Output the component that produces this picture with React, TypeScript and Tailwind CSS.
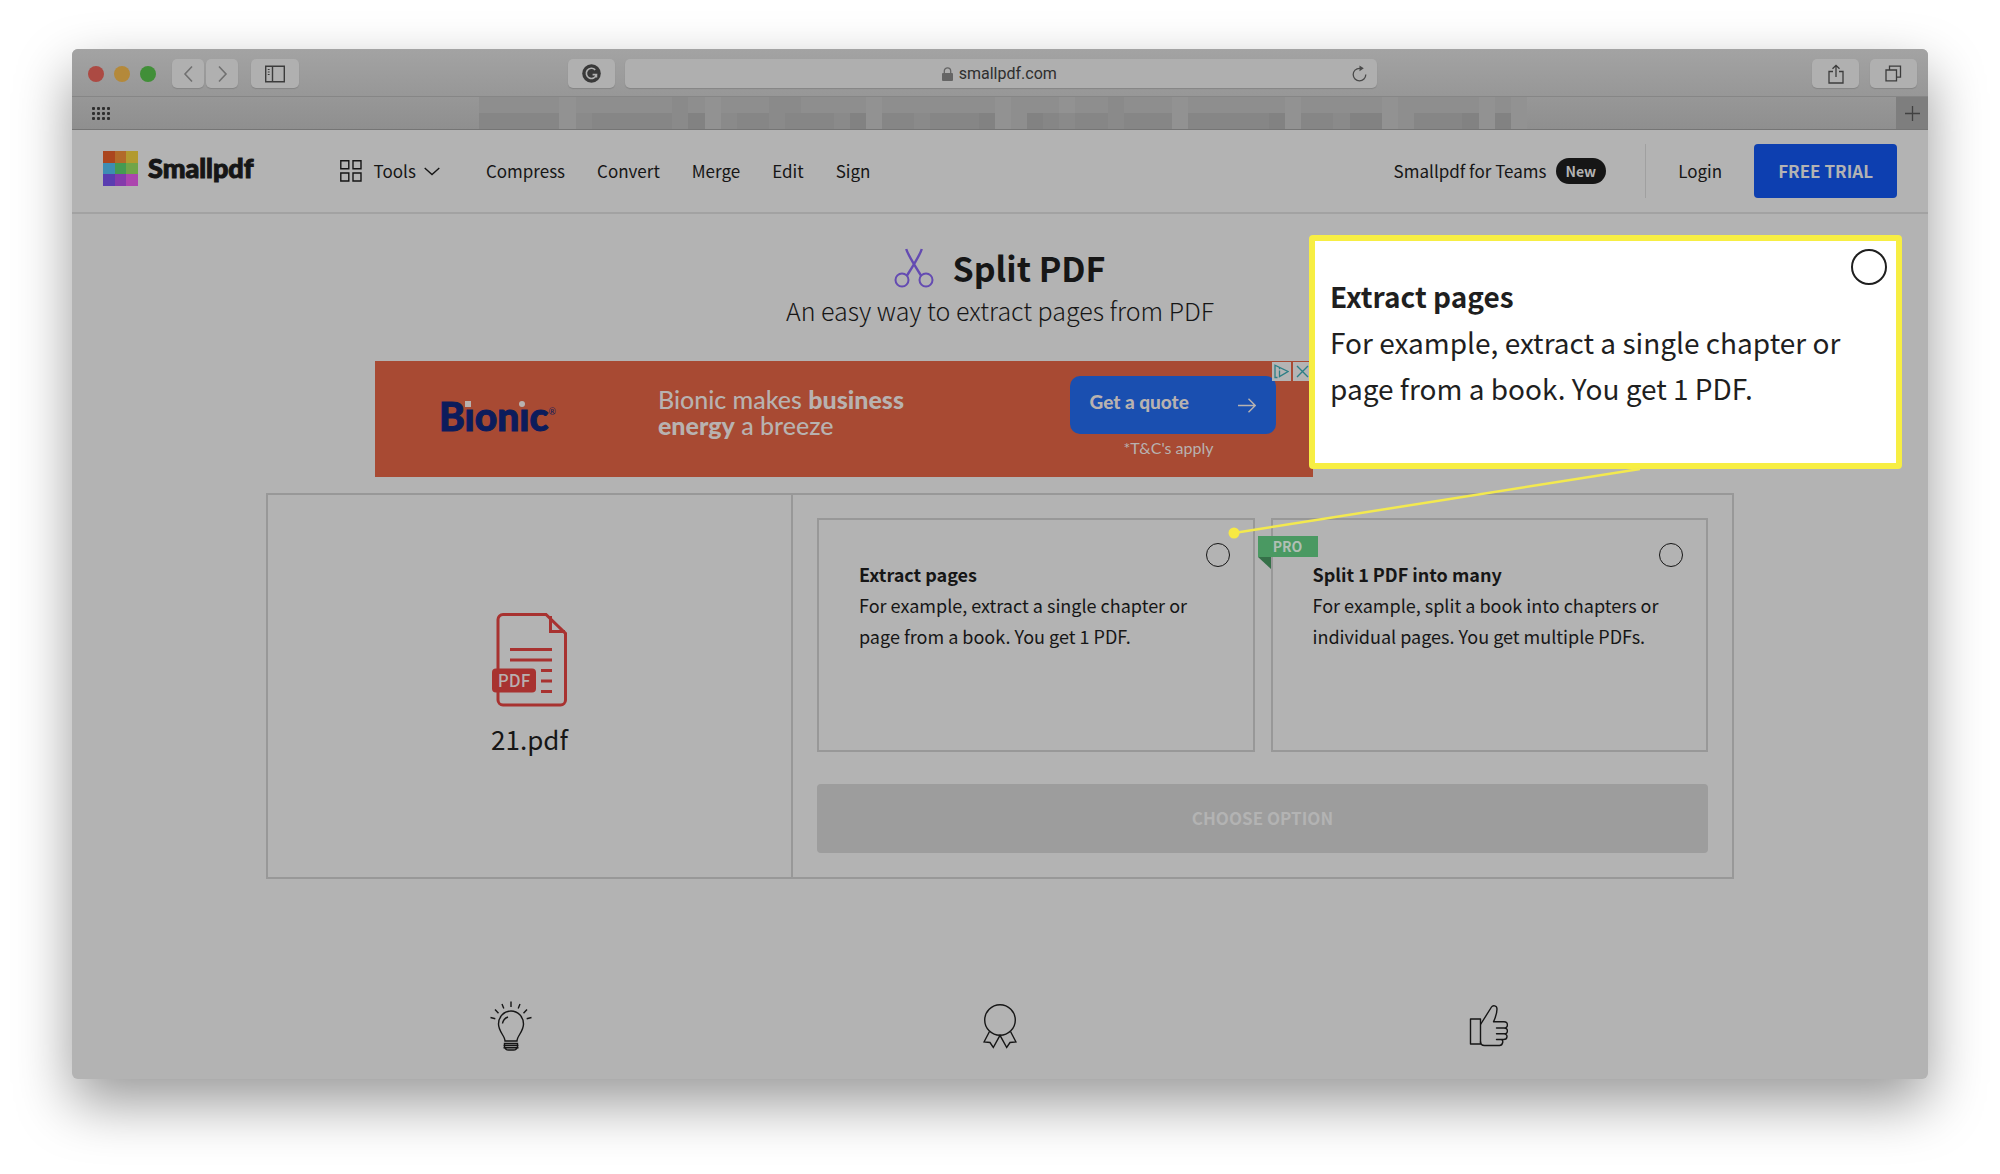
import React, { useState } from 'react';

const navLinks = ['Compress', 'Convert', 'Merge', 'Edit', 'Sign'];

const logoColors = [
  'bg-[#ab461f]', 'bg-[#b26a2a]', 'bg-[#b29a30]',
  'bg-[#3e8db3]', 'bg-[#459a52]', 'bg-[#70a548]',
  'bg-[#5a3db0]', 'bg-[#843bab]', 'bg-[#ac45ae]',
];

// shades of the blurred tab titles: upper half, lower half
const shades: Record<string, string> = {
  a: 'bg-[#929292]',
  b: 'bg-[#8e8e8e]',
  c: 'bg-[#8a8a8a]',
  d: 'bg-[#868686]',
  e: 'bg-[#828282]',
};
const tabRows = [
  'bbbbbabbbbbbcbabbbccbbbbabbbbbbbabbbabbcbbbabbbbbbabbbbbabbbbbaba',
  'dddddacdddddceacddcdddceaddcdddeabedcddcdddadddddeaddceeabdddeaea',
];

interface Option {
  id: string;
  title: string;
  lines: string[];
  pro: boolean;
}

const options: Option[] = [
  {
    id: 'extract',
    title: 'Extract pages',
    lines: ['For example, extract a single chapter or', 'page from a book. You get 1 PDF.'],
    pro: false,
  },
  {
    id: 'split',
    title: 'Split 1 PDF into many',
    lines: ['For example, split a book into chapters or', 'individual pages. You get multiple PDFs.'],
    pro: true,
  },
];

const toolButton =
  'flex h-[29px] items-center justify-center rounded-[5px] bg-[#b0b0b0] shadow-[0_1px_1px_#858585] text-[#3c3c3c]';

function TitleBar() {
  return (
    <div className="flex h-12 items-center border-b border-[#868686] bg-linear-to-b from-[#a3a3a3] to-[#979797] pt-[2px] pr-[11px] pl-4">
      <div className="flex shrink-0 gap-[10px]">
        <span className="h-4 w-4 rounded-full bg-[#ac4a43]" />
        <span className="h-4 w-4 rounded-full bg-[#b4893a]" />
        <span className="h-4 w-4 rounded-full bg-[#418f38]" />
      </div>
      <div className="ml-4 flex shrink-0 gap-[2px]">
        <button aria-label="Back" className={`${toolButton} w-8`}>
          <svg width="11" height="18" viewBox="0 0 11 18" fill="none" stroke="#707070" strokeWidth="1.6">
            <path d="M9 1.5 2 9l7 7.5" />
          </svg>
        </button>
        <button aria-label="Forward" className={`${toolButton} w-8`}>
          <svg width="11" height="18" viewBox="0 0 11 18" fill="none" stroke="#707070" strokeWidth="1.6">
            <path d="M2 1.5 9 9l-7 7.5" />
          </svg>
        </button>
      </div>
      <button aria-label="Sidebar" className={`${toolButton} ml-[13px] w-12 shrink-0`}>
        <svg width="20" height="18" viewBox="0 0 20 18" fill="none" stroke="currentColor" strokeWidth="1.4">
          <path d="M.7 1.2h18.6v15.6H.7zM7.5 1.2v15.6" />
          <path d="M2.8 4.5h2.6M2.8 7h2.6M2.8 9.5h2.6" strokeWidth="1.2" strokeDasharray="1.8 .8" />
        </svg>
      </button>
      <button aria-label="Grammarly" className={`${toolButton} ml-[14.7%] w-[47px] shrink-0`}>
        <svg width="19" height="19" viewBox="0 0 19 19" fill="none">
          <circle cx="9.5" cy="9.5" r="9.3" fill="#393939" />
          <path d="M13.2 5.9A5.1 5.1 0 1 0 14.4 10.6H10.6M14.4 10.4V13.4" stroke="#b0b0b0" strokeWidth="1.7" />
        </svg>
      </button>
      <div className="mr-[23.8%] ml-[10px] flex h-[29px] flex-1 items-center rounded-[5px] bg-[#afafaf] px-[10px] shadow-[0_1px_1px_#858585]">
        <div className="flex flex-1 items-center justify-center gap-[6px] pl-3 font-[Roboto,sans-serif] text-[16px] leading-[29px] text-[#2e2e2e]">
          <svg width="11" height="14" viewBox="0 0 11 14" fill="none">
            <rect x="0" y="6" width="11" height="8" rx="1" fill="#656565" />
            <path d="M2.3 6.5V4a3.2 3.2 0 0 1 6.4 0v2.5" stroke="#656565" strokeWidth="1.3" />
          </svg>
          <span>smallpdf.com</span>
        </div>
        <button aria-label="Reload" className="text-[#4a4a4a]">
          <svg width="15" height="17" viewBox="0 0 15 17" fill="none" stroke="currentColor" strokeWidth="1.3">
            <path d="M9 3.3H7.5A6.3 6.3 0 1 0 13.8 9.6" />
            <path d="M7.5.4 11.8 3.3 7.5 6.2z" fill="currentColor" stroke="none" />
          </svg>
        </button>
      </div>
      <div className="flex shrink-0 gap-[11px]">
        <button aria-label="Share" className={`${toolButton} w-[47px]`}>
          <svg width="16" height="20" viewBox="0 0 16 20" fill="none" stroke="currentColor" strokeWidth="1.3">
            <path d="M5 7.5H1V19h14V7.5h-4M8 13V1.5M4.5 4.8 8 1.3l3.5 3.5" />
          </svg>
        </button>
        <button aria-label="Show tabs" className={`${toolButton} w-[47px]`}>
          <svg width="17" height="17" viewBox="0 0 17 17" fill="none" stroke="currentColor" strokeWidth="1.3">
            <path d="M1 5h10.5v10.8H1zM4.5 4.8V1.2h11v11h-3.8" />
          </svg>
        </button>
      </div>
    </div>
  );
}

function TabBar() {
  return (
    <div className="flex h-[33px] items-stretch border-b border-[#757575] bg-linear-to-b from-[#979797] to-[#8f8f8f]">
      <button aria-label="Favorites" className="flex w-[38px] shrink-0 items-center justify-end pt-px">
        <svg width="18" height="14" viewBox="0 0 18 14" fill="#2f2f2f">
          {[0, 5, 10, 15].map((x) =>
            [0, 5, 10].map((y) => <rect key={`${x}-${y}`} x={x} y={y} width="3" height="3" rx="1" />)
          )}
        </svg>
      </button>
      <div className="flex flex-1 justify-center">
        <div className="flex w-[58.7%] flex-col">
          {tabRows.map((row) => (
            <div key={row} className="flex flex-1">
              {row.split('').map((shade, i) => (
                <span key={i} className={`flex-1 ${shades[shade]}`} />
              ))}
            </div>
          ))}
        </div>
      </div>
      <button aria-label="New tab" className="flex w-8 shrink-0 items-center justify-center bg-[#7e7e7e]">
        <svg width="15" height="15" viewBox="0 0 15 15" stroke="#414141" strokeWidth="1.3">
          <path d="M7.5 0v15M0 7.5h15" />
        </svg>
      </button>
    </div>
  );
}

function Header() {
  return (
    <header className="flex h-[84px] items-center border-b-2 border-[#a2a2a2] px-[31px] text-[17px]">
      <a href="#" className="flex items-center gap-[10px] pb-[5px]">
        <span className="grid h-[35px] w-[35px] grid-cols-3">
          {logoColors.map((color) => (
            <span key={color} className={color} />
          ))}
        </span>
        <span className="pb-[2px] font-[Lato,sans-serif] text-[27px] leading-8 font-black [-webkit-text-stroke:1px]">Smallpdf</span>
      </a>
      <button className="ml-[86px] flex items-center">
        <svg width="22" height="22" viewBox="0 0 22 22" fill="none" stroke="currentColor" strokeWidth="1.4">
          <path d="M.8.8h8v8h-8zM13 .8h8v8h-8zM.8 13h8v8h-8zM13 13h8v8h-8z" />
        </svg>
        <span className="ml-3">Tools</span>
        <svg className="ml-2" width="16" height="9" viewBox="0 0 16 9" fill="none" stroke="currentColor" strokeWidth="1.4">
          <path d="M.7 1 8 7.5 15.3 1" />
        </svg>
      </button>
      <nav className="ml-[46px] flex gap-8">
        {navLinks.map((link) => (
          <a key={link} href="#">{link}</a>
        ))}
      </nav>
      <div className="ml-auto flex items-center">
        <a href="#" className="flex items-center gap-[9px]">
          Smallpdf for Teams
          <span className="rounded-full bg-[#161616] px-[10px] text-[14px] leading-[26px] font-bold text-[#b3b3b3]">New</span>
        </a>
        <span className="ml-[39px] h-[54px] w-px bg-[#a0a0a0]" />
        <a href="#" className="ml-8">Login</a>
        <button className="ml-8 h-[54px] rounded-[4px] bg-[#0d3fb0] px-6 text-[17px] font-bold text-[#b3b3b3]">
          FREE TRIAL
        </button>
      </div>
    </header>
  );
}

function Banner() {
  return (
    <div className="mx-auto mt-[33px] w-full max-w-[1250px]">
      <div className="relative flex h-[116px] w-3/4 items-center bg-[#a84a33] pl-16 font-[Lato,sans-serif] text-[#b8b2b0]">
        <div className="relative flex items-start pb-[6px] text-[#0c1c5c]">
          <span className="text-[39px] leading-[44px] font-black [-webkit-text-stroke:1px]">Bıonıc</span>
          <span className="mt-3 text-[9px] leading-3">®</span>
          <span className="absolute top-[7px] left-[26px] h-[6px] w-[6px] bg-[#b8b2b0]" />
          <span className="absolute top-[7px] left-[80px] h-[6px] w-[6px] rounded-full bg-[#b8b2b0]" />
        </div>
        <p className="ml-[102px] pb-[14px] text-[25px] leading-[26px] font-medium">
          Bionic makes <b className="font-black">business</b>
          <br />
          <b className="font-black">energy</b> a breeze
        </p>
        <div className="mr-[37px] ml-auto flex flex-col items-center">
          <button className="flex h-[58px] w-[206px] items-center justify-between rounded-[10px] bg-[#1a4fb0] px-5">
            <span className="pb-[6px] text-[19px] font-black">Get a quote</span>
            <svg width="18" height="15" viewBox="0 0 18 15" fill="none" stroke="currentColor" strokeWidth="1.4">
              <path d="M0 7.5h17M10.5.8l6.7 6.7-6.7 6.7" />
            </svg>
          </button>
          <span className="pr-2 text-[16px] leading-7">*T&amp;C's apply</span>
        </div>
        <div className="absolute top-px right-px flex gap-[2px]">
          <button aria-label="Ad choices" className="bg-[#b4b4b4] p-[2px]">
            <svg width="15" height="15" viewBox="0 0 15 15" fill="none" stroke="#2c7f86" strokeWidth="1.3">
              <path d="M3.5 13.5H1V1.2L14 7.5l-8.5 5v-6M5.5 3.8v1.5" />
            </svg>
          </button>
          <button aria-label="Close ad" className="bg-[#b4b4b4] p-[2px]">
            <svg width="15" height="15" viewBox="0 0 15 15" fill="none" stroke="#2c7f86" strokeWidth="1.4">
              <path d="m2 2 11 11M13 2 2 13" />
            </svg>
          </button>
        </div>
      </div>
    </div>
  );
}

function PdfIcon() {
  return (
    <svg width="76" height="94" viewBox="0 0 76 94" fill="none" stroke="#a83230" strokeWidth="3">
      <path d="M6 57V6.5a5 5 0 0 1 5-5h43l19.5 19V87a5 5 0 0 1-5 5H11a5 5 0 0 1-5-5v-9" />
      <path d="M58.5 3v15.5H73" />
      <path d="M18 36.5h42M18 47h42M49 57.5h11M49 68h11M49 78.5h11" />
      <rect x="0" y="55.5" width="44" height="24" rx="4" fill="#a83230" stroke="none" />
      <text x="22" y="73.5" textAnchor="middle" fill="#b8b0b0" stroke="none" className="font-['Noto_Sans_CJK_SC',sans-serif] text-[17px] font-medium">
        PDF
      </text>
    </svg>
  );
}

interface OptionCardProps {
  option: Option;
  checked: boolean;
  onSelect: (id: string) => void;
}

function OptionCard({ option, checked, onSelect }: OptionCardProps) {
  return (
    <label className="relative block h-[234px] flex-1 border-2 border-[#989898] px-10 pt-[39px]">
      {option.pro && (
        <span className="absolute top-4 -left-[15px]">
          <span className="block w-[60px] bg-[#4a9962] text-center text-[14px] leading-[21px] font-bold text-[#b0bfb4]">PRO</span>
          <svg className="block" width="13" height="12" viewBox="0 0 13 12">
            <path d="M0 0h13v12z" fill="#357048" />
          </svg>
        </span>
      )}
      <input
        type="radio"
        name="mode"
        checked={checked}
        onChange={() => onSelect(option.id)}
        className="absolute top-[23px] right-[23px] h-6 w-6 appearance-none rounded-full border border-[#161616] checked:bg-[#161616]"
      />
      <span className="block text-[18px] leading-[31px] font-bold">{option.title}</span>
      {option.lines.map((line) => (
        <span key={line} className="block text-[18px] leading-[31px] whitespace-nowrap">{line}</span>
      ))}
    </label>
  );
}

function Benefits() {
  return (
    <div className="mx-auto mt-[121px] grid w-full max-w-[1468px] grid-cols-3 items-center justify-items-center pb-[27px]">
      <svg width="44" height="52" viewBox="0 0 44 52" fill="none" stroke="currentColor" strokeWidth="1.4">
        <path d="M16 41c0-5-6.500-9.500-6.500-17a12.500 13 0 0 1 25 0C34.500 31.500 28 36 28 41z" />
        <path d="M13.500 23.500c.5-3.500 2.500-5.500 5.500-6.500M15.500 43.500h13v3a4 3.500 0 0 1-4 3.500h-5a4 3.500 0 0 1-4-3.500zM14.500 45.500h15M14.500 47.800h15" />
        <path d="M22 1.500V7M13 4l1.800 4.500M31 4l-1.800 4.500M6 9.500l3.500 3.700M38 9.500l-3.500 3.700M1.500 17.500l4.800 1.200M42.500 17.500l-4.800 1.200" />
      </svg>
      <svg width="34" height="46" viewBox="0 0 34 46" fill="none" stroke="currentColor" strokeWidth="1.4">
        <circle cx="17" cy="17" r="15.3" />
        <path d="M6.5 28.5 1 39l6 .5 3.3 5L17 32.3l6.700 12.200 3.300-5 6-.5-5.500-10.500" />
      </svg>
      <svg width="42" height="42" viewBox="0 0 42 42" fill="none" stroke="currentColor" strokeWidth="1.4" strokeLinejoin="round">
        <path d="M2.5 14h10v25h-10z" />
        <path d="M12.5 19.5 23.5 2c1.300-2 5.500-1.800 5.500 2 0 4.500-1.500 8.500-3.500 12.800H36c4.500 0 4.500 6.200 0 6.200h-7.500H36c4.500 0 4.500 5.800 0 5.800h-7.500H36c4.200 0 4 5.700-.5 5.700h-7H33c3 0 2 6-1.500 6H16.500c-2.500 0-4-1.500-4-4" />
      </svg>
    </div>
  );
}

function Callout() {
  return (
    <aside className="absolute top-[186px] right-[26px] h-[234px] w-[593px] rounded-[4px] border-[6px] border-[#f7ee43] bg-white px-[15px] pt-8 text-[28px] leading-[46px] text-[#1f1f1f]">
      <span className="absolute top-2 right-[9px] h-9 w-9 rounded-full border-2 border-[#1f1f1f]" />
      <p className="font-bold">{options[0].title}</p>
      {options[0].lines.map((line) => (
        <p key={line} className="whitespace-nowrap">{line}</p>
      ))}
      <svg className="absolute top-[226px] -left-[88px]" width="420" height="74" viewBox="0 0 420 74" fill="none">
        <path d="M7 66 413 2" stroke="#f3e94f" strokeWidth="2.5" />
        <circle cx="7" cy="66" r="5.5" fill="#f7e943" />
      </svg>
    </aside>
  );
}

export default function App() {
  const [selected, setSelected] = useState('');

  return (
    <div className="min-h-screen bg-white px-[72px] pt-[49px] pb-[95px] font-['Noto_Sans_CJK_SC',sans-serif] text-[#161616]">
      <div className="relative rounded-[6px] bg-[#b3b3b3] shadow-[0_24px_56px_rgba(0,0,0,0.4)]">
        <div className="overflow-hidden rounded-[6px]">
          <TitleBar />
          <TabBar />
          <Header />
          <main className="pt-[30px]">
            <div className="flex items-center justify-center gap-[18px]">
              <svg width="40" height="40" viewBox="0 0 40 40" fill="none" stroke="#644bb2" strokeWidth="2">
                <circle cx="8" cy="32" r="6.5" />
                <circle cx="32" cy="32" r="6.5" />
                <path d="M13 27.5C16.5 22 26 7 27.8 1M27 27.5C23.5 22 14 7 12.2 1" strokeWidth="2.4" />
              </svg>
              <h1 className="text-[34px] leading-[48px] font-bold">Split PDF</h1>
            </div>
            <p className="text-center text-[25px] leading-9 font-light">An easy way to extract pages from PDF</p>
            <Banner />
            <section className="mx-auto mt-4 flex w-full max-w-[1468px] border-2 border-[#989898]">
              <div className="flex w-[525px] flex-col items-center justify-center gap-3 border-r-2 border-[#989898]">
                <PdfIcon />
                <span className="text-[26px] leading-10">21.pdf</span>
              </div>
              <div className="flex flex-1 flex-col px-6 pt-[23px] pb-6">
                <div className="flex gap-4">
                  {options.map((option) => (
                    <OptionCard
                      key={option.id}
                      option={option}
                      checked={selected === option.id}
                      onSelect={setSelected}
                    />
                  ))}
                </div>
                <button className="mt-8 h-[69px] rounded-[4px] bg-[#9d9d9d] pb-[2px] text-[17px] font-bold text-[#b3b3b3]">
                  CHOOSE OPTION
                </button>
              </div>
            </section>
            <Benefits />
          </main>
        </div>
        <Callout />
      </div>
    </div>
  );
}
